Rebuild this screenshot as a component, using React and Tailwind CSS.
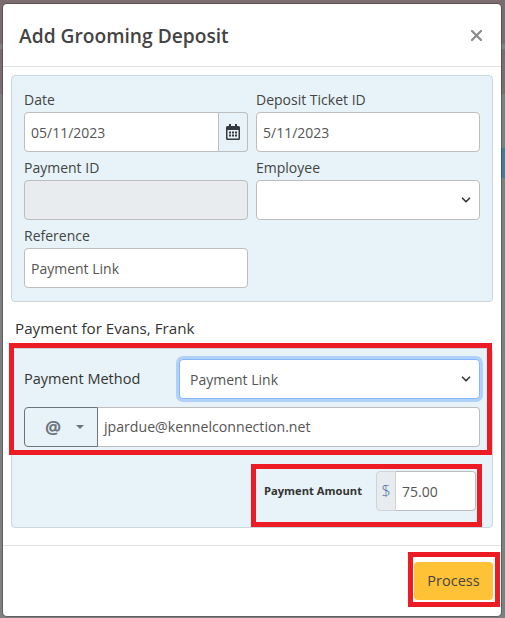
import { ChevronDown } from "lucide-react";

const fieldBase = "h-10 w-full rounded border border-[#bdbdbd] px-[6px] flex items-center text-[14px] text-[#555]";

function Label({ children, className = "" }) {
  return <div className={`h-6 text-[14px] leading-6 text-[#444] ${className}`}>{children}</div>;
}

function Chevron() {
  return <ChevronDown size={14} strokeWidth={3} className="text-[#343a40]" />;
}

function CalendarIcon() {
  return (
    <svg width="14" height="16" viewBox="0 0 14 16" fill="#343a40">
      <path d="M3 0h2v2h4V0h2v2h1.5A1.5 1.5 0 0 1 14 3.5v11a1.5 1.5 0 0 1-1.5 1.5h-11A1.5 1.5 0 0 1 0 14.5v-11A1.5 1.5 0 0 1 1.5 2H3V0zM1.5 6v8.5h11V6h-11z" />
      <path d="M3 7.5h2v2H3zM6 7.5h2v2H6zM9 7.5h2v2H9zM3 10.5h2v2H3zM6 10.5h2v2H6zM9 10.5h2v2H9z" />
    </svg>
  );
}

export default function App() {
  return (
    <div className="relative h-[618px] w-[505px] overflow-hidden bg-[#7d6c6f] font-['Open_Sans','Liberation_Sans',sans-serif]">
      {/* dimmed page behind the dialog */}
      <div className="absolute inset-x-0 top-[44px] h-[5px] bg-[#858080]" />
      <div className="absolute inset-x-0 top-[94px] h-[524px] bg-[#7f7f7f]" />
      <div className="absolute right-0 top-[148px] h-[30px] w-[4px] bg-[#4f7793]" />

      <div className="absolute left-[3px] top-[4px] h-[612px] w-[498px] rounded bg-white flex flex-col shadow-[0_0_0_1px_rgba(0,0,0,0.25)]">
        <div className="h-[63px] shrink-0 border-b border-[#dee2e6] flex items-center justify-between pl-[16px] pr-[19px]">
          <span className="mt-[2px] text-[19.2px] font-semibold text-[#444]">Add Grooming Deposit</span>
          <svg width="11" height="11" viewBox="0 0 11 11" stroke="#8a8a8a" strokeWidth="2.2" strokeLinecap="round">
            <path d="M1 1l9 9M10 1l-9 9" />
          </svg>
        </div>

        <div className="flex-1 px-[8px] pt-[8px]">
          <div className="rounded border border-[#c8d8de] bg-[#e7f3f8] px-[12px] pt-[12px] h-[227px]">
            <div className="grid grid-cols-2 gap-x-[8px]">
              <div>
                <Label>Date</Label>
                <div className="flex h-10">
                  <div className="flex h-10 flex-1 items-center rounded-l border border-[#bdbdbd] bg-white px-[6px] text-[14px] text-[#555]">05/11/2023</div>
                  <div className="flex h-10 w-[29px] items-center justify-center rounded-r border border-l-0 border-[#bdbdbd]"><CalendarIcon /></div>
                </div>
              </div>
              <div>
                <Label>Deposit Ticket ID</Label>
                <div className={`${fieldBase} bg-white`}>5/11/2023</div>
              </div>
              <div className="mt-[4px]">
                <Label>Payment ID</Label>
                <div className={`${fieldBase} bg-[#e9ecef]`} />
              </div>
              <div className="mt-[4px]">
                <Label>Employee</Label>
                <div className={`${fieldBase} bg-white justify-end pr-[6px]`}><Chevron /></div>
              </div>
              <div className="mt-[4px]">
                <Label>Reference</Label>
                <div className={`${fieldBase} bg-white`}>Payment Link</div>
              </div>
            </div>
          </div>

          <div className="mt-[14px] h-[24px] pl-[4px] text-[15.2px] font-medium leading-6 text-[#333]">Payment for Evans, Frank</div>

          <div className="mt-[8px] h-[180px] rounded border border-[#c8d8de] bg-[#e7f3f8] px-[12px] pt-[10px]">
            <div className="flex h-10 items-center">
              <span className="w-[155px] text-[14.5px] font-medium text-[#333]">Payment Method</span>
              <div className="flex h-10 flex-1 items-center justify-between rounded border border-[#86b7fe] bg-white pl-[10px] pr-[6px] text-[14px] text-[#555] shadow-[0_0_0_3px_rgba(13,110,253,0.25)]">
                Payment Link
                <Chevron />
              </div>
            </div>
            <div className="mt-[8px] flex h-10">
              <div className="flex h-10 w-[74px] items-center gap-[15px] rounded-l border border-[#6c757d] bg-[#e7f3f8] pl-[20px] text-[18px] font-bold text-[#6c757d]">
                @
                <span className="h-0 w-0 border-x-[4px] border-t-[4px] border-x-transparent border-t-[#6c757d]" />
              </div>
              <div className="flex h-10 flex-1 items-center rounded-r border border-l-0 border-[#bdbdbd] bg-white pl-[6px] text-[14.15px] text-[#555]">jpardue@kennelconnection.net</div>
            </div>
            <div className="mt-[24px] flex items-center justify-end pr-[4px]">
              <span className="mr-[14px] text-[11.2px] font-bold text-[#333]">Payment Amount</span>
              <div className="flex h-10 w-[100px]">
                <div className="flex w-[20px] items-center justify-center rounded-l border border-[#ced4da] bg-[#e9ecef] text-[16px] font-light text-[#3e6fa8]">$</div>
                <div className="flex flex-1 items-center rounded-r border border-l-0 border-[#bdbdbd] bg-white pl-[6px] text-[14px] text-[#555]">75.00</div>
              </div>
            </div>
          </div>
        </div>

        <div className="flex h-[71px] shrink-0 items-start justify-end border-t border-[#dee2e6] pr-[8px] pt-[16px]">
          <button className="h-[38px] w-[79px] rounded bg-[#ffc237] text-[14.5px] text-[#444]">Process</button>
        </div>
      </div>

      {/* red annotation boxes drawn over the screenshot */}
      <div className="absolute left-[9px] top-[343px] h-[112px] w-[483px] border-[5px] border-[#ed1c24]" />
      <div className="absolute left-[251px] top-[464px] h-[63px] w-[231px] border-[5px] border-[#ed1c24]" />
      <div className="absolute left-[408px] top-[552px] h-[55px] w-[92px] border-[5px] border-[#ed1c24]" />
    </div>
  );
}
